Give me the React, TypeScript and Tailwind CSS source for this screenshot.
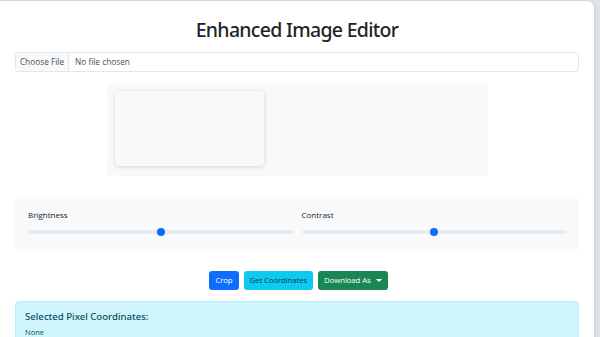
import React from "react";

function Slider({ label, pct }: { label: string; pct: number }) {
  return (
    <div className="flex-1 flex flex-col">
      <div className="text-[8px] text-[#212529] leading-[10px] h-[10px]">{label}</div>
      <div className="relative mt-[10px] h-[4px] rounded-full bg-[#e9ecef]">
        <div
          className="absolute top-1/2 w-[8px] h-[8px] -mt-[4px] -ml-[4px] rounded-full bg-[#0d6efd]"
          style={{ left: `${pct}%` }}
        />
      </div>
    </div>
  );
}

export default function App() {
  return (
    <div
      className="w-[600px] h-[337px] overflow-hidden bg-[#dde1e8] flex items-start"
      style={{ fontFamily: '"Open Sans", "Noto Sans", sans-serif' }}
    >
      <div className="w-[594px] shrink-0 mt-[1px] bg-white rounded-tr-[7px] shadow-[0_0_3px_rgba(0,0,0,0.12)] px-[15px] pt-[16px] pb-[20px]">
        <h1
          className="text-center text-[19.5px] font-medium text-[#212529] leading-[25px] tracking-[-0.7px]"
          style={{ fontFamily: '"Noto Sans", "Open Sans", sans-serif' }}
        >
          Enhanced Image Editor
        </h1>
        <div className="mt-[10px] h-[20px] flex items-stretch border border-[#e3e6ea] rounded-[3px] text-[8.3px] text-[#212529] overflow-hidden">
          <div className="w-[53px] bg-[#f8f9fa] border-r border-[#e3e6ea] flex items-center justify-center text-[#495057]">
            Choose File
          </div>
          <div className="flex items-center pl-[6px] text-[#495057]">No file chosen</div>
        </div>
        <div className="mt-[11px] mx-auto w-[381px] h-[93px] bg-[#f8f9fa] rounded-[3px] p-[8px]">
          <div className="w-[149px] h-[75px] bg-[#f8f9fa] rounded-[4px] shadow-[0_1px_4px_rgba(0,0,0,0.15)]" />
        </div>
        <div className="mt-[21px] h-[54px] bg-[#f8f9fa] rounded-[4px] pl-[13px] pr-[12px] pt-[13px] flex gap-[8px]">
          <Slider label="Brightness" pct={50} />
          <Slider label="Contrast" pct={50} />
        </div>
        <div className="mt-[20px] flex justify-center gap-[5px] pl-[3px] text-[7.8px] tracking-[-0.1px]">
          <button className="h-[19px] px-[6px] rounded-[3px] bg-[#0d6efd] text-white">Crop</button>
          <button className="h-[19px] px-[6px] rounded-[3px] bg-[#0dcaf0] text-[#063c47]">Get Coordinates</button>
          <button className="h-[19px] px-[6px] rounded-[3px] bg-[#198754] text-white flex items-center gap-[5px]">
            Download As
            <span className="w-0 h-0 border-l-[3px] border-r-[3px] border-t-[3px] border-l-transparent border-r-transparent border-t-white" />
          </button>
        </div>
        <div className="mt-[11px] h-[60px] bg-[#cff4fc] border border-[#b6effb] rounded-[4px] px-[9px] pt-[8px] text-[#055160]">
          <div
            className="text-[9.6px] font-medium leading-[14px]"
            style={{ fontFamily: '"Noto Sans", "Open Sans", sans-serif' }}
          >
            Selected Pixel Coordinates:
          </div>
          <div className="text-[7.5px] mt-[3px] leading-[10px]">None</div>
        </div>
      </div>
    </div>
  );
}
